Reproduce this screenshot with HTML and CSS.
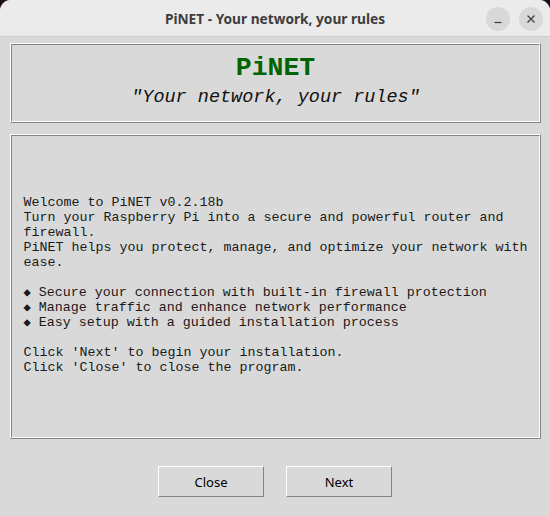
FILE: index.html
```html
<!DOCTYPE html>
<html>
<head>
<meta charset="utf-8">
<link rel="stylesheet" href="styles.css">
</head>
<body>
<div class="window">
  <div class="titlebar">
    <span class="title">PiNET - Your network, your rules</span>
    <div class="controls">
      <span class="ctl"><svg width="10" height="10" viewBox="0 0 10 10"><path d="M1.5 8.5h7" stroke="#3d3d3d" stroke-width="1.2"/></svg></span>
      <span class="ctl"><svg width="10" height="10" viewBox="0 0 10 10"><path d="M1.5 1.5l7 7M8.5 1.5l-7 7" stroke="#3d3d3d" stroke-width="1.2"/></svg></span>
    </div>
  </div>
  <div class="content">
    <div class="frame header">
      <div class="frame-inner header-inner">
        <div class="brand">PiNET</div>
        <div class="tagline">"Your network, your rules"</div>
      </div>
    </div>
    <div class="frame body">
      <div class="frame-inner body-inner">
<pre class="msg">Welcome to PiNET v0.2.18b
Turn your Raspberry Pi into a secure and powerful router and
firewall.
PiNET helps you protect, manage, and optimize your network with
ease.

<span class="dia">◆</span> Secure your connection with built-in firewall protection
<span class="dia">◆</span> Manage traffic and enhance network performance
<span class="dia">◆</span> Easy setup with a guided installation process

Click 'Next' to begin your installation.
Click 'Close' to close the program.</pre>
      </div>
    </div>
    <div class="buttons">
      <button class="btn">Close</button>
      <button class="btn">Next</button>
    </div>
  </div>
</div>
</body>
</html>
```
FILE: styles.css
```css
html, body {
  margin: 0;
  padding: 0;
  background: #1f0e19;
}
.window {
  width: 550px;
  height: 516px;
  border-radius: 11px 11px 0 0;
  overflow: hidden;
  background: #d9d9d9;
  display: flex;
  flex-direction: column;
}
.titlebar {
  height: 37px;
  box-sizing: border-box;
  background: #ebebeb;
  border-bottom: 1px solid #cdcdcd;
  display: flex;
  align-items: center;
  justify-content: center;
  position: relative;
}
.title {
  font-family: "Noto Sans", sans-serif;
  font-weight: 700;
  font-size: 13.7px;
  color: #3d3d3d;
}
.controls {
  position: absolute;
  right: 7px;
  top: 7px;
  display: flex;
  gap: 9px;
}
.ctl {
  width: 24px;
  height: 24px;
  border-radius: 50%;
  background: #d8d8d8;
  display: flex;
  align-items: center;
  justify-content: center;
}
.content {
  flex: 1;
  display: flex;
  flex-direction: column;
  padding: 6px 9px 0 10px;
}
.frame {
  border: 1px solid;
  border-color: #ffffff #858585 #858585 #ffffff;
}
.frame-inner {
  border: 1px solid;
  border-color: #858585 #ffffff #ffffff #858585;
}
.header-inner {
  height: 67px;
  padding-top: 9px;
  display: flex;
  flex-direction: column;
  align-items: center;
}
.brand {
  font-family: "Liberation Mono", monospace;
  font-weight: 700;
  font-size: 26.5px;
  line-height: 28px;
  color: #006400;
}
.tagline {
  font-family: "Liberation Mono", monospace;
  font-style: italic;
  font-size: 18.5px;
  line-height: 24px;
  color: #111;
  margin-top: 4px;
}
.body {
  margin-top: 11px;
}
.body-inner {
  height: 297px;
  padding-bottom: 4px;
  display: flex;
  align-items: center;
  justify-content: center;
}
.msg {
  margin: 0;
  font-family: "Liberation Mono", monospace;
  font-size: 13.333px;
  line-height: 15px;
  color: #1a1a1a;
  width: 504px;
}
.dia {
  font-family: "DejaVu Sans Mono", monospace;
  font-size: 12px;
  line-height: 15px;
  vertical-align: top;
}
.buttons {
  display: flex;
  justify-content: center;
  gap: 22px;
  margin-top: 27px;
  margin-left: -1px;
}
.btn {
  width: 106px;
  height: 31px;
  box-sizing: border-box;
  background: #d9d9d9;
  border: 1px solid;
  border-color: #ffffff #858585 #858585 #ffffff;
  font-family: "Noto Sans", sans-serif;
  font-size: 13px;
  color: #000;
  padding: 0;
}
```
